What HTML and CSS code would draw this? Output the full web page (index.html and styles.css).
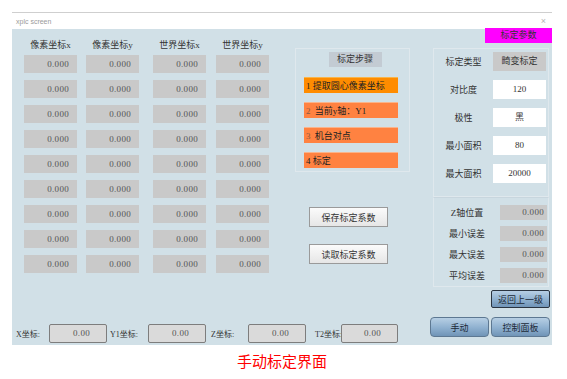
FILE: index.html
```html
<!DOCTYPE html>
<html lang="zh">
  <head>
    <meta charset="UTF-8" />
    <title>xplc screen</title>
    <link rel="stylesheet" href="styles.css">
  </head>
  <body>
    <div class="page">
      <div class="window">
        <div class="titlebar">
          <span class="title">xplc screen</span>
          <span class="close">×</span>
        </div>
        <div class="content">
          <div class="main">
            <div class="top">
              <div class="table">
                <div class="table-head">
                  <span>像素坐标x</span>
                  <span>像素坐标y</span>
                  <span>世界坐标x</span>
                  <span>世界坐标y</span>
                </div>
                <div class="table-body" id="tableBody"></div>
              </div>
              <div class="steps-col">
                <div class="steps">
                  <div class="steps-title">标定步骤</div>
                  <div class="step step-active">1 提取圆心像素坐标</div>
                  <div class="step"><span class="num">2</span> 当前y轴：Y1</div>
                  <div class="step"><span class="num">3</span> 机台对点</div>
                  <div class="step">4 标定</div>
                </div>
                <button type="button" class="plain-btn save-btn">保存标定系数</button>
                <button type="button" class="plain-btn read-btn">读取标定系数</button>
              </div>
            </div>
            <div class="coords">
              <span class="coord-label lbl-x">X坐标:</span>
              <span class="coord-box">0.00</span>
              <span class="coord-label lbl-y1">Y1坐标:</span>
              <span class="coord-box">0.00</span>
              <span class="coord-label lbl-z">Z坐标:</span>
              <span class="coord-box">0.00</span>
              <span class="coord-label lbl-t2">T2坐标:</span>
              <span class="coord-box last">0.00</span>
            </div>
          </div>
          <div class="side">
            <div class="tab">标定参数</div>
            <div class="params">
              <div class="param-row">
                <span class="param-label">标定类型</span>
                <span class="param-value gray">畸变标定</span>
              </div>
              <div class="param-row">
                <span class="param-label">对比度</span>
                <span class="param-value">120</span>
              </div>
              <div class="param-row">
                <span class="param-label">极性</span>
                <span class="param-value">黑</span>
              </div>
              <div class="param-row">
                <span class="param-label">最小面积</span>
                <span class="param-value">80</span>
              </div>
              <div class="param-row">
                <span class="param-label">最大面积</span>
                <span class="param-value">20000</span>
              </div>
            </div>
            <div class="errors">
              <div class="err-row">
                <span class="err-label">Z轴位置</span>
                <span class="err-value">0.000</span>
              </div>
              <div class="err-row">
                <span class="err-label">最小误差</span>
                <span class="err-value">0.000</span>
              </div>
              <div class="err-row">
                <span class="err-label">最大误差</span>
                <span class="err-value">0.000</span>
              </div>
              <div class="err-row">
                <span class="err-label">平均误差</span>
                <span class="err-value">0.000</span>
              </div>
            </div>
            <button type="button" class="blue-btn back-btn">返回上一级</button>
            <div class="nav">
              <button type="button" class="blue-btn">手动</button>
              <button type="button" class="blue-btn">控制面板</button>
            </div>
          </div>
        </div>
      </div>
      <div class="caption">手动标定界面</div>
    </div>

    <script>
      // 9 rows x 4 columns of coordinate cells
      const tableBody = document.getElementById("tableBody");
      for (let i = 0; i < 36; i++) {
        const cell = document.createElement("span");
        cell.className = "cell";
        cell.textContent = "0.000";
        tableBody.appendChild(cell);
      }
    </script>
  </body>
</html>
```

FILE: styles.css
```css
body {
  margin: 0;
  background-color: #fff;
  font-family: "Liberation Serif", "Noto Sans CJK SC", serif;
  color: #333;
}
.page {
  padding: 12px 0 0 12px;
  width: 540px;
}
.window {
  width: 540px;
  border-top: 1px solid #cfcfcf;
}
.titlebar {
  height: 16px;
  display: flex;
  justify-content: space-between;
  align-items: center;
  padding: 0 6px 0 4px;
  background-color: #fff;
}
.titlebar .title {
  font-family: "Liberation Sans", sans-serif;
  font-size: 7px;
  color: #9a9a9a;
}
.titlebar .close {
  font-family: "Liberation Sans", sans-serif;
  font-size: 9px;
  color: #b5b5b5;
}
.content {
  height: 316px;
  display: flex;
  background-color: #d1e0e7;
}

/* left + middle area */
.main {
  width: 418px;
  display: flex;
  flex-direction: column;
  padding-bottom: 2px;
  box-sizing: border-box;
}
.top {
  display: flex;
}
.table {
  margin-left: 12px;
  padding-top: 10px;
}
.table-head,
.table-body {
  display: grid;
  grid-template-columns: 62px 67px 63px 53px;
}
.table-head {
  height: 12px;
  margin-bottom: 4px;
}
.table-head span {
  width: 53px;
  text-align: center;
  font-size: 9px;
  line-height: 12px;
  color: #333;
}
.table-body {
  row-gap: 7px;
}
.cell {
  width: 53px;
  height: 18px;
  line-height: 18px;
  background-color: #c9c9c9;
  text-align: right;
  padding-right: 8px;
  box-sizing: border-box;
  font-size: 9px;
  letter-spacing: 0.3px;
  color: #555;
}

.steps-col {
  margin-left: 26px;
  display: flex;
  flex-direction: column;
}
.steps {
  margin-top: 19px;
  width: 115px;
  height: 124px;
  box-sizing: border-box;
  border: 1px solid #dfe8ed;
  padding: 3px 11px 3px 8px;
  display: flex;
  flex-direction: column;
  gap: 9px;
}
.steps-title {
  align-self: center;
  width: 53px;
  height: 15px;
  line-height: 15px;
  margin: 0 0 1px 8px;
  background-color: #c3cbd3;
  text-align: center;
  font-size: 9px;
  color: #333;
}
.step {
  height: 16px;
  line-height: 16px;
  background-color: #ff8241;
  border-top: 1px solid #f9b48c;
  box-sizing: border-box;
  padding-left: 2px;
  font-size: 9px;
  color: #222;
}
.step-active {
  background-color: #ff8c00;
  border-top-color: #f8b54a;
}
.step .num {
  color: #8a5a44;
  margin-right: 2px;
}
.plain-btn {
  width: 79px;
  height: 20px;
  margin-left: 14px;
  padding: 0;
  background: linear-gradient(#fbfbfb, #e6e6e6);
  border: 1px solid #9a9a9a;
  font-family: inherit;
  font-size: 9px;
  color: #333;
}
.save-btn {
  margin-top: 35px;
}
.read-btn {
  margin-top: 17px;
}

.coords {
  margin-top: auto;
  display: flex;
  align-items: center;
  height: 19px;
}
.coord-label {
  font-size: 8px;
  color: #333;
  white-space: nowrap;
}
.lbl-x {
  width: 29px;
  margin: 0 4px 0 4px;
}
.lbl-y1 {
  width: 35px;
  margin: 0 3px 0 3px;
}
.lbl-z {
  width: 34px;
  margin: 0 3px 0 5px;
}
.lbl-t2 {
  width: 22px;
  margin: 0 4px 0 9px;
}
.coord-box {
  width: 58px;
  height: 19px;
  line-height: 17px;
  box-sizing: border-box;
  border: 1px solid #7d7d7d;
  border-radius: 2px;
  background-color: #dadada;
  text-align: right;
  padding-right: 16px;
  font-size: 9px;
  letter-spacing: 0.3px;
  color: #555;
}
.coord-box.last {
  width: 57px;
}

/* right column */
.side {
  width: 122px;
  display: flex;
  flex-direction: column;
}
.tab {
  align-self: flex-end;
  margin-top: -1px;
  width: 67px;
  height: 15px;
  line-height: 15px;
  background-color: #ff00ff;
  text-align: center;
  font-size: 9px;
  color: #333;
}
.params,
.errors {
  margin-left: 3px;
  width: 116px;
  box-sizing: border-box;
  border: 1px solid #dfe8ed;
  display: flex;
  flex-direction: column;
}
.params {
  margin-top: 5px;
  height: 149px;
  padding-top: 3px;
  gap: 9px;
}
.errors {
  border-top-color: #c8d6de;
  height: 90px;
  padding-top: 7px;
  gap: 6px;
}
.param-row,
.err-row {
  display: flex;
  align-items: center;
}
.param-label {
  width: 59px;
  text-align: center;
  font-size: 9px;
  color: #333;
}
.param-value {
  width: 53px;
  height: 19px;
  line-height: 19px;
  background-color: #fff;
  text-align: center;
  font-size: 9px;
  color: #333;
}
.param-value.gray {
  background-color: #c9c9c9;
}
.err-label {
  width: 66px;
  text-align: center;
  font-size: 9px;
  color: #333;
}
.err-value {
  width: 47px;
  height: 15px;
  line-height: 15px;
  background-color: #c9c9c9;
  text-align: right;
  padding-right: 3px;
  box-sizing: border-box;
  font-size: 9px;
  letter-spacing: 0.3px;
  color: #555;
}
.blue-btn {
  width: 59px;
  height: 20px;
  padding: 0;
  border: 1px solid #5d7892;
  border-radius: 4px;
  background: linear-gradient(#b7cfe4, #8eb0cf 55%, #7094b7);
  font-family: inherit;
  font-size: 9px;
  color: #1c2a38;
}
.back-btn {
  align-self: flex-end;
  margin: 3px 2px 0 0;
  height: 18px;
  border-radius: 2px;
  border-color: #2a3440;
}
.nav {
  margin-top: 9px;
  display: flex;
  gap: 2px;
}

.caption {
  margin-top: 7px;
  text-align: center;
  font-family: "Noto Sans CJK SC", sans-serif;
  font-size: 15px;
  line-height: 18px;
  color: #ff0000;
}
```
